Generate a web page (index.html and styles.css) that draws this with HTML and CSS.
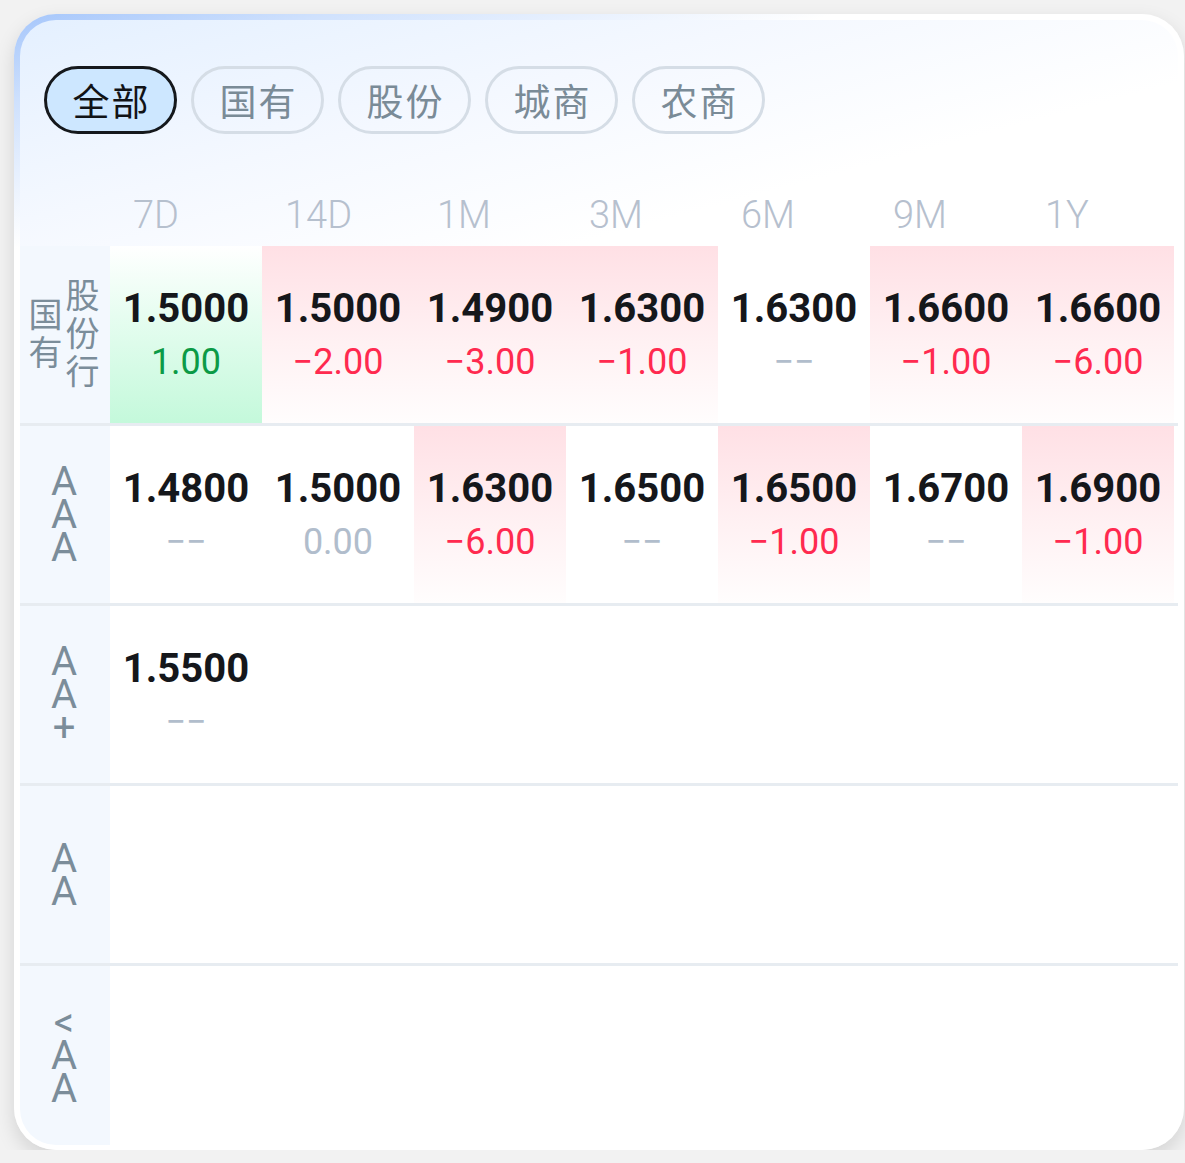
FILE: index.html
```html
<!DOCTYPE html>
<html lang="zh-CN">
<head>
<meta charset="utf-8">
<title>利率矩阵</title>
<link rel="stylesheet" href="styles.css">
</head>
<body>
<div class="card">
  <div class="inner">
    <div class="tabs">
      <div class="tab active">全部</div>
      <div class="tab">国有</div>
      <div class="tab">股份</div>
      <div class="tab">城商</div>
      <div class="tab">农商</div>
    </div>
    <div class="head">
      <div class="corner"></div>
      <div class="hcell">7D</div>
      <div class="hcell">14D</div>
      <div class="hcell">1M</div>
      <div class="hcell">3M</div>
      <div class="hcell">6M</div>
      <div class="hcell">9M</div>
      <div class="hcell">1Y</div>
    </div>

    <div class="row">
      <div class="label"><span class="cn">国有<br>股份行</span></div>
      <div class="cell green"><div class="val">1.5000</div><div class="chg up">1.00</div></div>
      <div class="cell pink"><div class="val">1.5000</div><div class="chg down">−2.00</div></div>
      <div class="cell pink"><div class="val">1.4900</div><div class="chg down">−3.00</div></div>
      <div class="cell pink"><div class="val">1.6300</div><div class="chg down">−1.00</div></div>
      <div class="cell"><div class="val">1.6300</div><div class="chg none">−−</div></div>
      <div class="cell pink"><div class="val">1.6600</div><div class="chg down">−1.00</div></div>
      <div class="cell pink"><div class="val">1.6600</div><div class="chg down">−6.00</div></div>
    </div>

    <div class="row">
      <div class="label"><span class="lat">AAA</span></div>
      <div class="cell"><div class="val">1.4800</div><div class="chg none">−−</div></div>
      <div class="cell"><div class="val">1.5000</div><div class="chg none">0.00</div></div>
      <div class="cell pink"><div class="val">1.6300</div><div class="chg down">−6.00</div></div>
      <div class="cell"><div class="val">1.6500</div><div class="chg none">−−</div></div>
      <div class="cell pink"><div class="val">1.6500</div><div class="chg down">−1.00</div></div>
      <div class="cell"><div class="val">1.6700</div><div class="chg none">−−</div></div>
      <div class="cell pink"><div class="val">1.6900</div><div class="chg down">−1.00</div></div>
    </div>

    <div class="row">
      <div class="label"><span class="lat">AA+</span></div>
      <div class="cell"><div class="val">1.5500</div><div class="chg none">−−</div></div>
    </div>

    <div class="row">
      <div class="label"><span class="lat">AA</span></div>
    </div>

    <div class="row last">
      <div class="label"><span class="lat">&lt;AA</span></div>
    </div>
  </div>
</div>
</body>
</html>
```
FILE: styles.css
```css
* { box-sizing: border-box; }

html, body {
  margin: 0;
  padding: 0;
  background: #f2f2f2;
  font-family: Roboto, "Noto Sans CJK SC", sans-serif;
}

.card {
  width: 1170px;
  margin: 14px 0 0 14px;
  padding: 6px 6px 5px 6px;
  border-radius: 42px;
  background: linear-gradient(164deg, #a5c6fb 0%, #cfe1fd 6%, #ffffff 16%);
  box-shadow: 0 8px 20px rgba(0, 0, 0, 0.13);
}

.inner {
  border-radius: 36px;
  overflow: hidden;
  background: linear-gradient(165deg, #e4f0ff 0%, #f4f8ff 14%, #ffffff 26%);
}

.tabs {
  display: flex;
  gap: 14px;
  padding: 46px 0 0 24px;
}

.tab {
  width: 133px;
  height: 68px;
  border: 3px solid #d5dde6;
  border-radius: 34px;
  display: flex;
  align-items: center;
  justify-content: center;
  font-family: "Noto Sans CJK SC", sans-serif;
  font-size: 37px;
  letter-spacing: 2px;
  color: #7a8b97;
  padding-left: 2px;
}

.tab.active {
  background: #cde7ff;
  border-color: #15181c;
  color: #111316;
}

.head {
  display: grid;
  grid-template-columns: 90px repeat(7, 152px) 1fr;
  height: 112px;
  padding-top: 58px;
}

.hcell {
  font-size: 38px;
  font-weight: 300;
  line-height: 46px;
  color: #b6c0ce;
  padding-left: 23px;
}

.row {
  display: grid;
  grid-template-columns: 90px repeat(7, 152px) 1fr;
  height: 180px;
  border-bottom: 3px solid #e7ecf1;
}

.row.last {
  height: 179px;
  border-bottom: none;
}

.label {
  background: #f3f8fe;
  display: flex;
  align-items: center;
  justify-content: center;
  color: #7b8d9a;
}

.cn {
  writing-mode: vertical-lr;
  font-family: "Noto Sans CJK SC", sans-serif;
  font-size: 34px;
  line-height: 37px;
  letter-spacing: 4px;
  text-align: center;
  margin-left: -2px;
}

.lat {
  width: 30px;
  word-break: break-all;
  text-align: center;
  font-size: 40px;
  line-height: 33px;
  margin-left: -2px;
}

.cell {
  text-align: center;
  padding-top: 38px;
}

.cell.pink {
  background: linear-gradient(180deg, #ffe0e5 0%, #fff1f3 55%, #fffdfd 100%);
}

.cell.green {
  background: linear-gradient(180deg, #ffffff 0%, #e6fdf0 40%, #c4f9db 100%);
}

.val {
  font-size: 40px;
  font-weight: 700;
  line-height: 50px;
  color: #15171b;
}

.chg {
  font-size: 36px;
  line-height: 44px;
  margin-top: 6px;
}

.chg.up { color: #0b9a46; }
.chg.down { color: #ff2a4f; }
.chg.none { color: #b1bdcc; }
```
